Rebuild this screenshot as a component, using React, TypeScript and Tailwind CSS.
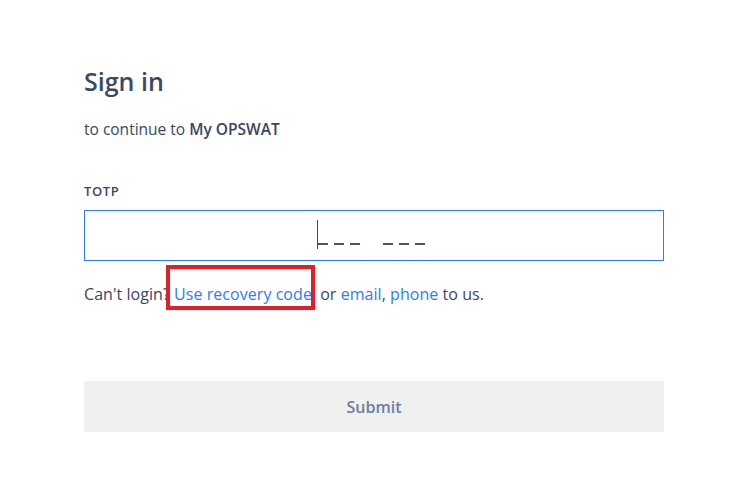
export default function App() {
  return (
    <div
      className="min-h-[480px] w-[750px] bg-white text-[#3a4664]"
      style={{ fontFamily: '"Open Sans", "Liberation Sans", sans-serif' }}
    >
      <div className="ml-[84px] w-[580px] pt-[64px]">
        <h1 className="text-[25px] font-semibold leading-[34px] text-[#3b4866]">Sign in</h1>
        <p className="mt-[21px] text-[15.5px] leading-[20px] text-[#3a4664]">
          to continue to <span className="font-semibold">My OPSWAT</span>
        </p>

        <label className="mt-[44px] block text-[13px] font-semibold leading-[16px] tracking-[0.6px] text-[#3a4664]">
          TOTP
        </label>
        <div className="mt-[11px] flex h-[51px] items-center justify-center border border-[#2f7cf6]">
          <span className="relative ml-[-6px] mt-[16px] flex items-end gap-[6px] pl-[1px]">
            <span className="absolute left-0 top-[-23px] h-[29px] w-[1px] bg-[#3a4664]" />
            <Dash />
            <Dash />
            <Dash />
            <span className="w-[11px]" />
            <Dash />
            <Dash />
            <Dash />
          </span>
        </div>

        <p className="mt-[22px] text-[16px] leading-[22px] tracking-[0.05px] text-[#3a4664]">
          Can't login?{' '}
          <span className="relative mr-[4px]">
            <a className="text-[#2f7cf6]">Use recovery code</a>
            <span className="pointer-events-none absolute left-[-8px] right-[-3px] top-[-18px] bottom-[-5px] border-[4px] border-[#e41e26]" />
          </span>{' '}
          or <a className="text-[#2f7cf6]">email</a>, <a className="text-[#2f7cf6]">phone</a> to us.
        </p>

        <button className="mt-[76px] flex h-[51px] w-full items-center justify-center bg-[#f0f0f0] text-[16px] font-semibold text-[#6b7ea6]">
          Submit
        </button>
      </div>
    </div>
  );
}

function Dash() {
  return <span className="block h-[2px] w-[10px] bg-[#4a5570]" />;
}
